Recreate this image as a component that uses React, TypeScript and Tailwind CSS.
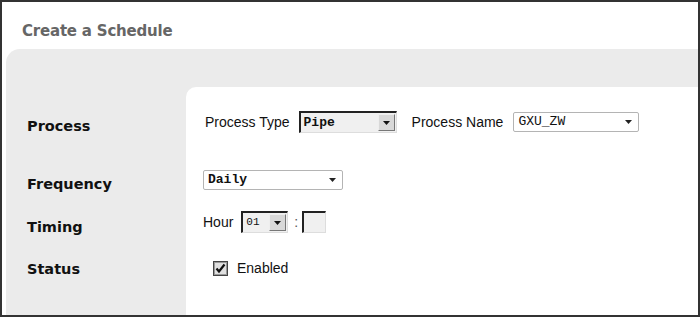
import React from "react";

function InsetSelect({ value, width, small }: { value: string; width: string; small?: boolean }) {
  return (
    <div
      className={`${width} h-[22px] flex items-stretch bg-[#f0f0f0] border-t-2 border-l-2 border-t-[#222] border-l-[#222] border-b border-r border-b-[#ddd] border-r-[#ddd]`}
    >
      <div
        className={`flex-1 flex items-center pl-[3px] font-['Liberation_Mono',monospace] ${small ? "text-[11px]" : "text-[13px] font-bold"} text-[#111]`}
      >
        {value}
      </div>
      <div className="w-[17px] my-[1px] mr-[1px] flex items-center justify-center bg-[#d8d8d8] border border-[#777] border-t-[#eee] border-l-[#eee]">
        <svg width="7" height="4" viewBox="0 0 7 4">
          <path d="M0 0H7L3.5 4Z" fill="#111" />
        </svg>
      </div>
    </div>
  );
}

function FlatSelect({ value, width, bold }: { value: string; width: string; bold?: boolean }) {
  return (
    <div className={`${width} h-[20px] flex items-center justify-between border border-[#b4b4b4] rounded-[2px] bg-white pl-[4px] pr-[6px]`}>
      <span className={`font-['Liberation_Mono',monospace] text-[13px] ${bold ? "font-bold" : ""} text-[#111]`}>{value}</span>
      <svg width="7" height="4" viewBox="0 0 7 4">
        <path d="M0 0H7L3.5 4Z" fill="#222" />
      </svg>
    </div>
  );
}

export default function App() {
  return (
    <div className="w-[700px] h-[317px] border-2 border-[#333] bg-white flex flex-col overflow-hidden font-['Liberation_Sans',Arial,sans-serif]">
      <div className="h-[47px] flex items-center pl-[20px] pt-[12px] shrink-0">
        <h1 className="font-['DejaVu_Sans',Verdana,sans-serif] font-bold text-[15px] text-[#666] tracking-[-0.2px]">
          Create a Schedule
        </h1>
      </div>

      <div className="flex-1 ml-[4px] bg-[#ebebeb] rounded-tl-[14px] pt-[38px] flex">
        <div className="w-[180px] shrink-0 pl-[21px] flex flex-col font-['DejaVu_Sans',Verdana,sans-serif] font-bold text-[14.5px] text-[#111] leading-[20px]">
          <div className="mt-[29px]">Process</div>
          <div className="mt-[38px]">Frequency</div>
          <div className="mt-[23px]">Timing</div>
          <div className="mt-[22px]">Status</div>
        </div>

        <div className="flex-1 bg-white rounded-tl-[10px] pl-[17px] flex flex-col text-[14px] text-[#111]">
          <div className="mt-[24px] h-[22px] flex items-center ml-[2px]">
            <span>Process Type</span>
            <div className="ml-[9px]">
              <InsetSelect value="Pipe" width="w-[98px]" />
            </div>
            <span className="ml-[15px]">Process Name</span>
            <div className="ml-[10px]">
              <FlatSelect value="GXU_ZW" width="w-[126px]" />
            </div>
          </div>

          <div className="mt-[37px]">
            <FlatSelect value="Daily" width="w-[140px]" bold />
          </div>

          <div className="mt-[21px] h-[22px] flex items-center">
            <span>Hour</span>
            <div className="ml-[8px]">
              <InsetSelect value="01" width="w-[47px]" small />
            </div>
            <span className="ml-[6px] text-[#555]">:</span>
            <div className="ml-[4px] w-[24px] h-[22px] bg-[#f0f0f0] border-t-2 border-l-2 border-t-[#222] border-l-[#222] border-b border-r border-b-[#ddd] border-r-[#ddd]" />
          </div>

          <div className="mt-[27px] ml-[10px] flex items-center h-[16px]">
            <svg width="15" height="15" viewBox="0 0 15 15">
              <rect x="0.5" y="0.5" width="14" height="14" fill="#e0e0e0" stroke="#444" />
              <rect x="1.5" y="1.5" width="12" height="12" fill="none" stroke="#999" />
              <path d="M3.5 7.5L6 10.5L11.5 3.5" fill="none" stroke="#111" strokeWidth="2.2" />
            </svg>
            <span className="ml-[9px]">Enabled</span>
          </div>
        </div>
      </div>
    </div>
  );
}
